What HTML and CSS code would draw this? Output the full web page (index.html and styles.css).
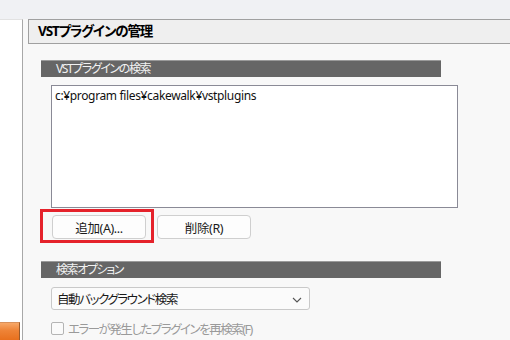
FILE: index.html
```html
<!DOCTYPE html>
<html lang="ja">

<head>
    <meta charset="utf-8">
    <title>VSTプラグインの管理</title>
    <link rel="stylesheet" href="styles.css">
</head>

<body>
    <div class="topbar"></div>
    <div class="layout">
        <div class="sidebar">
            <div class="side-btn"></div>
        </div>
        <div class="main">
            <h2 class="title">VSTプラグインの管理</h2>
            <div class="content">
                <div class="section">VSTプラグインの検索</div>
                <div class="pathlist">c:¥program files¥cakewalk¥vstplugins</div>
                <div class="btnrow">
                    <button class="btn">追加(A)...</button>
                    <button class="btn">削除(R)</button>
                    <!-- highlight box drawn over the add button -->
                    <div class="mark"></div>
                </div>
                <div class="section">検索オプション</div>
                <div class="select">
                    <span>自動バックグラウンド検索</span>
                    <svg class="chev" width="10" height="6" viewBox="0 0 10 6">
                        <path d="M1 1 L5 5 L9 1" fill="none" stroke="#555" stroke-width="1.1"/>
                    </svg>
                </div>
                <label class="check">
                    <span class="box"></span>
                    <span>エラーが発生したプラグインを再検索(F)</span>
                </label>
            </div>
        </div>
    </div>
</body>

</html>
```

FILE: styles.css
```css
body {
    margin: 0;
    width: 510px;
    height: 340px;
    overflow: hidden;
    background-color: #f8f8f8;
    font-family: "Noto Sans", "Noto Sans CJK JP", sans-serif;
    font-feature-settings: "palt";
    color: #1a1a1a;
}

.topbar {
    height: 19px;
    background-color: #f0f1f4;
}

.layout {
    display: flex;
    gap: 5px;
}

.sidebar {
    width: 23px;
    height: 321px;
    background-color: #fff;
    border-right: 1px solid #a8a8a8;
    border-top: 1px solid #e2e2e2;
    box-sizing: border-box;
    display: flex;
    flex-direction: column;
    justify-content: flex-end;
}

.side-btn {
    width: 20px;
    height: 18px;
    box-sizing: border-box;
    background: linear-gradient(#f7a868, #ee8336 45%, #e8701e);
    border-right: 1px solid #9a5a2a;
    border-top: 1px solid #d8905a;
}

.main {
    flex: 1;
}

.title {
    margin: 0;
    height: 25px;
    box-sizing: border-box;
    border: 1px solid #a0a0a0;
    border-right: none;
    background-color: #efefef;
    padding-left: 9px;
    font-size: 13.5px;
    font-weight: bold;
    letter-spacing: -1.1px;
    line-height: 23px;
    color: #000;
}

.content {
    padding: 16px 0 0 13px;
}

.section {
    width: 400px;
    height: 17px;
    box-sizing: border-box;
    background-color: #666;
    border-top: 1px solid #9a9a9a;
    padding-left: 15px;
    font-size: 12px;
    letter-spacing: -1.4px;
    line-height: 15px;
    color: #f2f2f2;
}

.pathlist {
    margin: 8px 0 0 10px;
    width: 407px;
    height: 123px;
    box-sizing: border-box;
    background-color: #fff;
    border: 1px solid #8a8a96;
    padding: 2px 0 0 3px;
    font-size: 12px;
    letter-spacing: -0.35px;
    line-height: 16px;
    color: #111;
}

.btnrow {
    position: relative;
    display: flex;
    gap: 11px;
    margin: 7px 0 0 11px;
    height: 46px;
}

.btn {
    width: 94px;
    height: 24px;
    background-color: #fdfdfd;
    border: 1px solid #cfcfcf;
    border-radius: 4px;
    font-family: inherit;
    font-feature-settings: "palt";
    font-size: 12.5px;
    letter-spacing: -0.4px;
    color: #1a1a1a;
    padding: 0;
}

.mark {
    position: absolute;
    left: -12px;
    top: -6px;
    width: 114px;
    height: 34px;
    box-sizing: border-box;
    border: 3px solid #e5222b;
}

.select {
    margin: 9px 0 0 10px;
    width: 259px;
    height: 23px;
    box-sizing: border-box;
    background-color: #fbfbfb;
    border: 1px solid #c9c9c9;
    border-radius: 3px;
    padding: 0 7px 0 5px;
    display: flex;
    align-items: center;
    justify-content: space-between;
    font-size: 12.5px;
    letter-spacing: -1.4px;
    color: #1a1a1a;
}

.chev {
    margin-top: 2px;
}

.check {
    margin: 9px 0 0 10px;
    display: flex;
    align-items: center;
    gap: 3px;
    font-size: 12.5px;
    letter-spacing: -1.5px;
    color: #9a9a9a;
}

.box {
    width: 13px;
    height: 13px;
    box-sizing: border-box;
    border: 1px solid #b4b4b4;
    border-radius: 2px;
    background-color: #fafafa;
    margin-right: 1px;
}
```
